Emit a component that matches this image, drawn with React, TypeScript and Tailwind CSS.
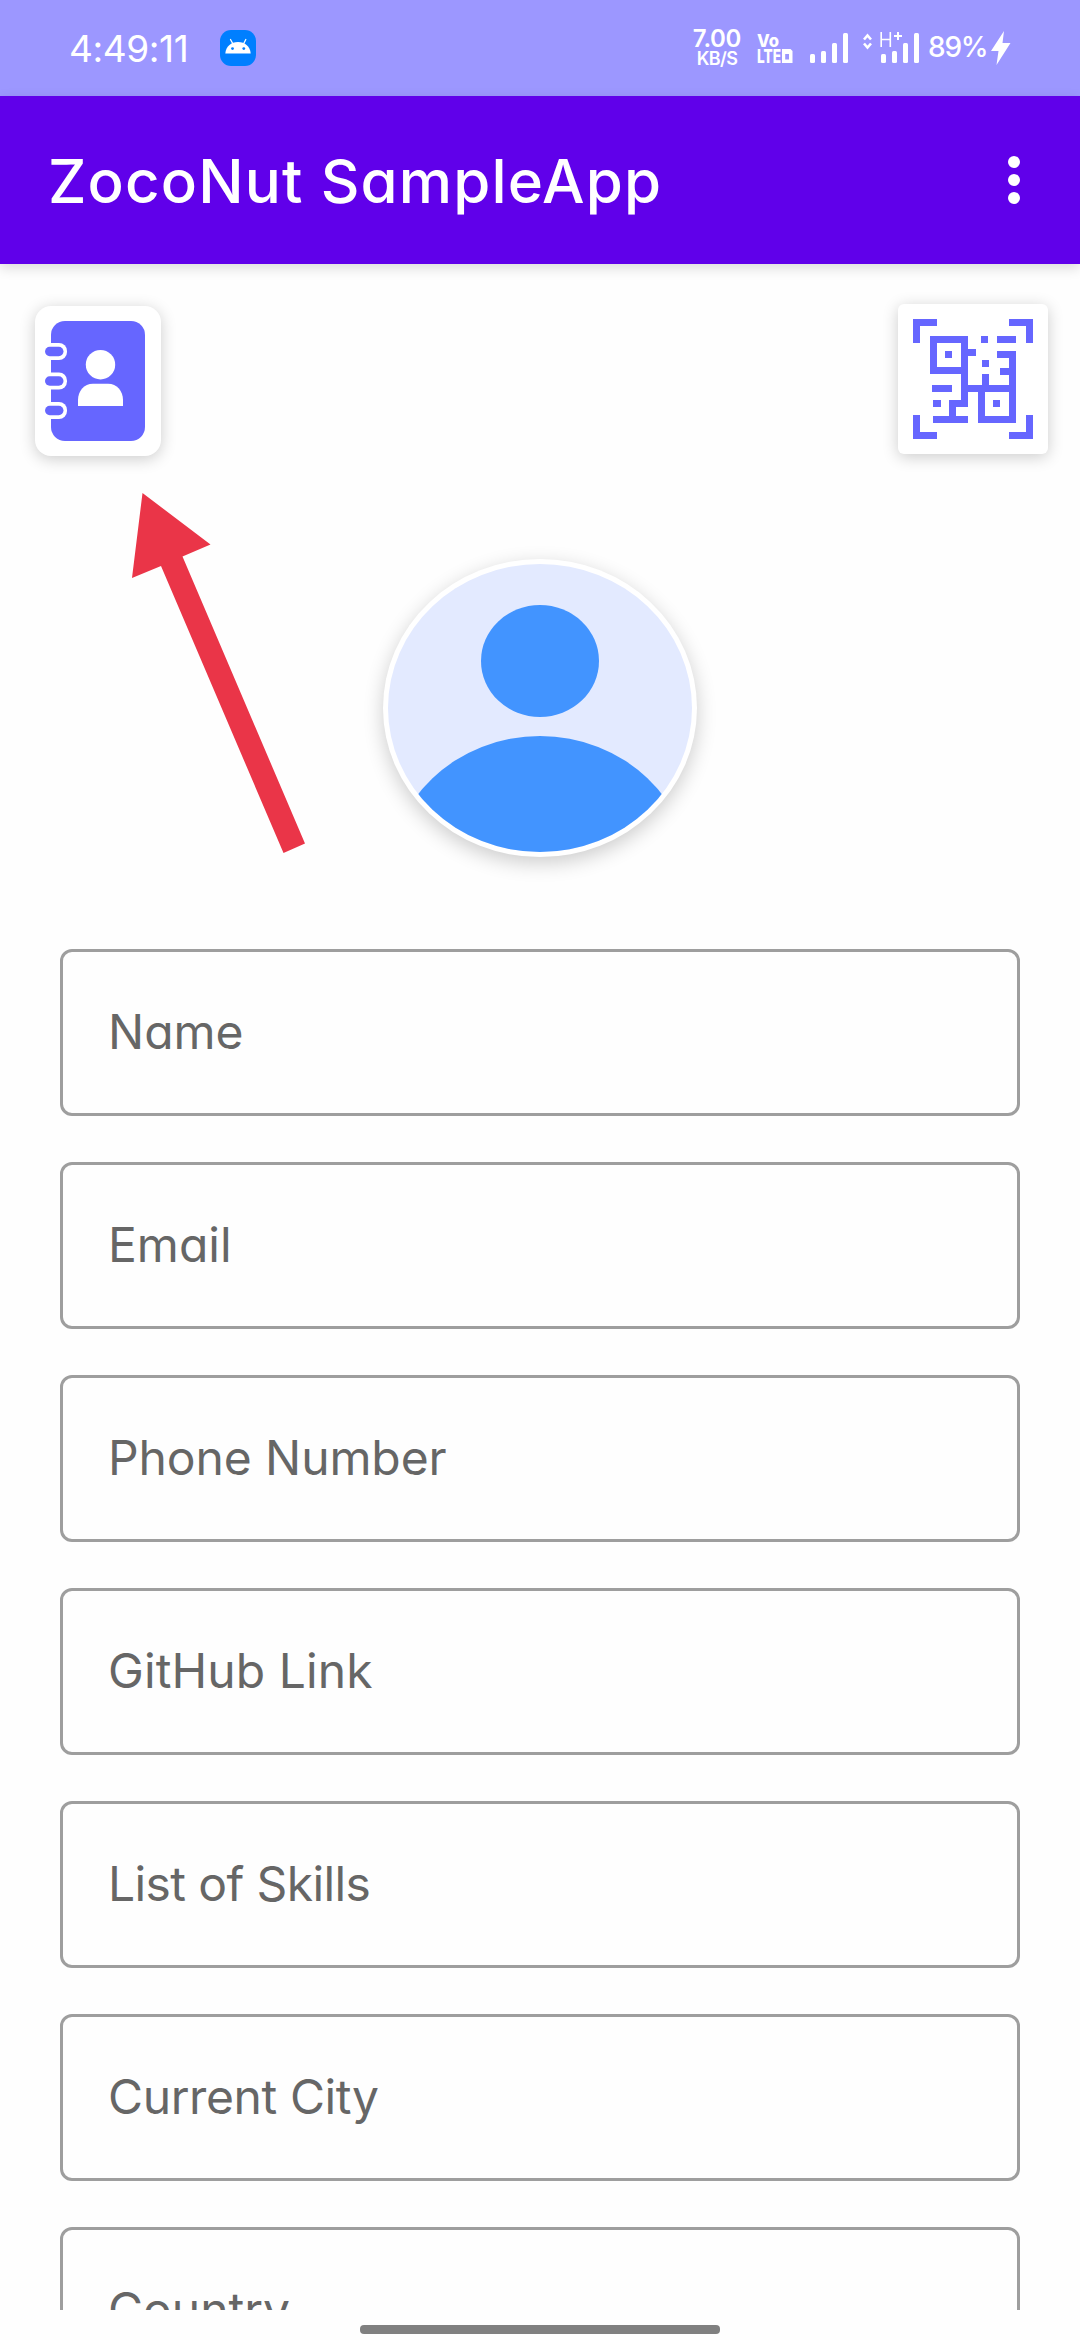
const fields = [
  { label: 'Name', tracking: 'tracking-[0px]' },
  { label: 'Email', tracking: 'tracking-[0px]' },
  { label: 'Phone Number', tracking: 'tracking-[-0.1px]' },
  { label: 'GitHub Link', tracking: 'tracking-[0.1px]' },
  { label: 'List of Skills', tracking: 'tracking-[-0.6px]' },
  { label: 'Current City', tracking: 'tracking-[-0.4px]' },
  { label: 'Country', tracking: 'tracking-[0px]' },
];

function AndroidBadge() {
  return (
    <svg className="ml-8 size-9" viewBox="0 0 36 36">
      <rect width="36" height="36" rx="11" fill="#007fff" />
      <path d="M5.3 23.5C5.8 16.5 11 12 18 12s12.200 4.500 12.700 11.500Z" fill="#fff" />
      <path d="M10.500 9.500l2.500 4.500M25.800 9.500L23.500 14" stroke="#fff" strokeWidth="1.300" strokeLinecap="round" />
      <circle cx="12.500" cy="18.600" r="1.400" fill="#007fff" />
      <circle cx="23.800" cy="18.600" r="1.400" fill="#007fff" />
    </svg>
  );
}

function VolteIcon() {
  return (
    <svg className="h-8 w-9 overflow-visible" viewBox="757 32 36 32" fill="#fff">
      <text x="757" y="47" fontSize="18" fontWeight="800" fontFamily="Inter, sans-serif" textLength="22" lengthAdjust="spacingAndGlyphs">Vo</text>
      <text x="757" y="63" fontSize="19" fontWeight="800" fontFamily="Inter, sans-serif" textLength="24" lengthAdjust="spacingAndGlyphs">LTE</text>
      <path fillRule="evenodd" d="M782 49h8.500l2 2v12H782zM785.200 54v5.500h3.800V54z" />
    </svg>
  );
}

function SignalBars() {
  return (
    <g>
      <rect x="0" y="54" width="5" height="9" rx="1.500" />
      <rect x="11" y="51" width="5" height="12" rx="1.500" />
      <rect x="22" y="43" width="5" height="20" rx="1.500" />
      <rect x="33" y="33" width="5" height="30" rx="1.500" />
    </g>
  );
}

function StatusBar() {
  return (
    <header className="flex h-24 shrink-0 items-center bg-[#9c97ff] pr-[69px] pl-[69px] text-white">
      <span className="w-[119px] whitespace-nowrap text-[37px] leading-none font-normal tracking-[-0.4px]">4:49:11</span>
      <AndroidBadge />
      <div className="ml-auto flex h-24 items-center">
        <div className="flex w-[50px] flex-col items-center whitespace-nowrap font-semibold">
          <span className="text-[24px] leading-[19px] tracking-[-0.3px]">7.00</span>
          <span className="mt-0.5 text-[18px] leading-[18px] tracking-[-0.6px]">KB/S</span>
        </div>
        <div className="ml-[15px] flex">
          <VolteIcon />
        </div>
        <svg className="ml-[17px] h-24 w-[38px]" viewBox="0 0 38 96" fill="#fff">
          <SignalBars />
        </svg>
        <svg className="ml-[15px] h-24 w-[56px]" viewBox="863 0 56 96" fill="#fff">
          <path d="M864 39.500l3.500-4 3.500 4M864 43.500l3.500 4 3.500-4" fill="none" stroke="#fff" strokeWidth="2.600" />
          <path d="M881.200 32v15M890.300 32v15M881.200 39.500h9.100" fill="none" stroke="#fff" strokeWidth="1.600" />
          <path d="M898 32v8M894 36h8" fill="none" stroke="#fff" strokeWidth="2" />
          <g transform="translate(881 0)">
            <SignalBars />
          </g>
        </svg>
        <span className="ml-[9px] w-[57px] whitespace-nowrap pb-0.5 text-[28px] leading-none font-medium tracking-[-1.2px]">89%</span>
        <svg className="ml-[6px] h-[34px] w-[20px]" viewBox="0 0 20 34" fill="#fff">
          <path d="M13 0L0 20h7.500L5.500 34 19.500 12h-8z" />
        </svg>
      </div>
    </header>
  );
}

function AppBar() {
  return (
    <div className="z-10 flex h-[168px] shrink-0 items-center justify-between bg-[#6000ea] pr-[60px] pl-12 text-white shadow-[0_4px_12px_rgba(0,0,0,0.14)]">
      <h1 className="whitespace-nowrap pt-0.5 text-[60px] leading-none font-medium tracking-[1.15px]">ZocoNut SampleApp</h1>
      <div className="flex flex-col gap-1.5">
        <span className="size-3 rounded-full bg-white" />
        <span className="size-3 rounded-full bg-white" />
        <span className="size-3 rounded-full bg-white" />
      </div>
    </div>
  );
}

function ContactsButton() {
  return (
    <button className="mt-0.5 h-[150px] w-[126px] rounded-2xl bg-white shadow-[0_3px_16px_rgba(0,0,0,0.2)]">
      <svg className="h-[150px] w-[126px]" viewBox="35 306 126 150">
        <rect x="51" y="321" width="94" height="120" rx="14" fill="#6666ff" />
        {[351.5, 381, 410.5].map((y) => (
          <g key={y}>
            <rect x="40" y={y - 8.5} width="27" height="17" rx="8" fill="#fff" />
            <rect x="45" y={y - 4.700} width="18.500" height="9.400" rx="4.700" fill="#6666ff" />
          </g>
        ))}
        <circle cx="100.500" cy="364.700" r="14.700" fill="#fff" />
        <path d="M78 406v-6c0-9 6-16.300 15-16.300h15c9 0 15 7.300 15 16.300v6z" fill="#fff" />
      </svg>
    </button>
  );
}

function QrButton() {
  return (
    <button className="size-[150px] rounded-md bg-white shadow-[0_3px_16px_rgba(0,0,0,0.2)]">
      <svg className="size-[150px]" viewBox="0 0 150 150" fill="#6666ff" shapeRendering="crispEdges">
        <path d="M15 15h24v7H22v17h-7zM111 15h24v24h-7V22h-17zM15 111h7v17h17v7H15zM128 111h7v24h-24v-7h17z" />
        <path fillRule="evenodd" d="M32 32h38v38H32zM39 39v24h24V39z" />
        <path fillRule="evenodd" d="M80 81h38v38H80zM87 88v24h24V88z" />
        <path d="M47 47h7v7h-7zM70 45h8v7h-8zM83 32h7v7h-7zM99 32h19v7H99zM84 56h7v7h-7z" />
        <path d="M99 47h19v34h-7V71h-9v-7h9V54H99zM84 70h7v11h-7zM63 70h7v11h12v7H70v15H58v9h12v7H35v-7h16V96h12z" />
        <path d="M34 81h20v7H34zM35 96h8v7h-8zM95 96h7v7h-7z" />
      </svg>
    </button>
  );
}

function Avatar() {
  return (
    <div className="mt-[103px] h-[298px] w-[314px] self-center rounded-[50%] bg-white shadow-[0_6px_20px_rgba(0,0,0,0.2)]">
      <svg className="h-[298px] w-[314px]" viewBox="383 559 314 298">
        <clipPath id="avatar-face">
          <ellipse cx="540" cy="708" rx="152" ry="144" />
        </clipPath>
        <g clipPath="url(#avatar-face)">
          <rect x="383" y="559" width="314" height="298" fill="#e3eaff" />
          <ellipse cx="540" cy="661" rx="59" ry="56" fill="#4294ff" />
          <ellipse cx="540" cy="880" rx="152" ry="144" fill="#4294ff" />
        </g>
      </svg>
    </div>
  );
}

export default function App() {
  return (
    <div className="flex h-[2340px] w-[1080px] flex-col overflow-hidden bg-[#fefefe] font-['Inter',sans-serif] [font-feature-settings:'cv11']">
      <StatusBar />
      <AppBar />
      <main className="relative flex h-[2046px] shrink-0 flex-col overflow-hidden pt-10">
        <div className="flex h-[152px] items-start justify-between pr-8 pl-[35px]">
          <ContactsButton />
          <QrButton />
        </div>
        <Avatar />
        <svg className="absolute top-[229px] left-[132px] h-[361px] w-[174px]" viewBox="132 493 174 361">
          <polygon points="142.500,493 210.500,544.500 182.500,556.500 305,843.500 283.500,853 161,566 132,578" fill="#ea3548" />
        </svg>
        <form className="mt-[92px] flex flex-col gap-[46px] px-[60px]">
          {fields.map(({ label, tracking }) => (
            <label key={label} className="flex h-[167px] shrink-0 items-center rounded-xl border-3 border-[#9e9e9e] pb-0.5 pl-[45px]">
              <span className={`whitespace-nowrap text-[48px] leading-none text-[#666666] ${tracking}`}>{label}</span>
            </label>
          ))}
        </form>
      </main>
      <div className="mt-[15px] h-[9px] w-[360px] self-center rounded bg-[#808080]" />
    </div>
  );
}
